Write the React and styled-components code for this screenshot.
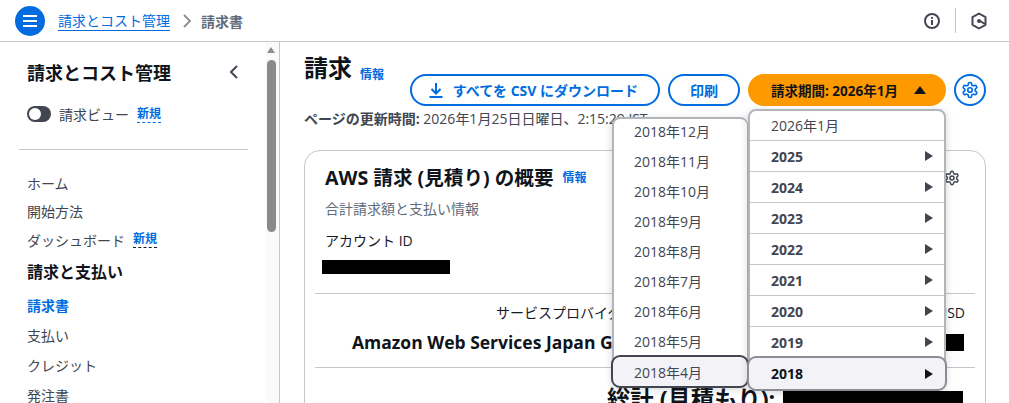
import styled, { createGlobalStyle } from "styled-components";

const GlobalStyle = createGlobalStyle`
  html, body {
    margin: 0;
    height: 403px;
    overflow: hidden;
    background: #ffffff;
    color: #16191f;
    font-family: "Open Sans", "Noto Sans CJK JP", sans-serif;
    font-size: 14px;
  }
  * { box-sizing: border-box; }
`;

const Page = styled.div`
  width: 1009px;
  height: 403px;
  display: flex;
  flex-direction: column;
  overflow: hidden;
`;

const TopBar = styled.header`
  height: 42px;
  flex-shrink: 0;
  display: flex;
  align-items: center;
  padding: 0 22px 0 15px;
  border-bottom: 1px solid #c6c6cd;
`;

const MenuButton = styled.button`
  width: 30px;
  height: 30px;
  border: 0;
  padding: 0;
  border-radius: 50%;
  background: #006ce0;
  color: #fff;
  display: grid;
  place-items: center;
  margin-right: 13px;
`;

const Crumb = styled.a`
  color: #006ce0;
  font-size: 14px;
  line-height: 19px;
  border-bottom: 1px solid #006ce0;
`;

const CrumbCurrent = styled.span`
  color: #5f6b7a;
  font-size: 14px;
  font-weight: 700;
`;

const CrumbSep = styled.span`
  display: flex;
  margin: 0 9px 0 12px;
  color: #8c8c94;
`;

const TopActions = styled.div`
  margin-left: auto;
  display: flex;
  align-items: center;
  color: #424650;
`;

const TopDivider = styled.span`
  width: 1px;
  height: 25px;
  background: #c6c6cd;
  margin: 0 15px;
`;

const Body = styled.div`
  flex: 1;
  display: flex;
  min-height: 0;
`;

const Side = styled.nav`
  width: 266px;
  flex-shrink: 0;
  padding: 18px 18px 0 19px;
`;

const SideHead = styled.div`
  display: flex;
  align-items: center;
  justify-content: space-between;
  padding: 0 9px 0 8px;
  height: 24px;
  font-size: 18px;
  font-weight: 700;
  color: #0f141a;
`;

const ViewToggle = styled.div`
  display: flex;
  align-items: center;
  gap: 8px;
  margin-top: 18px;
  padding-left: 8px;
  color: #424650;
  height: 24px;
`;

const Switch = styled.span`
  width: 24px;
  height: 16px;
  border-radius: 8px;
  background: #424650;
  position: relative;
  &::before {
    content: "";
    position: absolute;
    left: 2px;
    top: 2px;
    width: 12px;
    height: 12px;
    border-radius: 50%;
    background: #fff;
  }
`;

const NewTag = styled.span`
  color: #006ce0;
  font-size: 12px;
  font-weight: 700;
  line-height: 16px;
  border-bottom: 1px dashed ${(p) => (p.$dark ? "#16191f" : "#006ce0")};
`;

const SideRule = styled.hr`
  border: 0;
  border-top: 1px solid #c6c6cd;
  margin: 23px 0 0;
`;

const NavList = styled.ul`
  list-style: none;
  margin: 19px 0 0;
  padding: 0 0 0 8px;
  display: flex;
  flex-direction: column;
`;

const NavItem = styled.li`
  height: ${(p) => (p.$h ? p.$h : 30)}px;
  flex-shrink: 0;
  display: flex;
  align-items: center;
  gap: 8px;
  margin-bottom: ${(p) => (p.$head ? 2 : 0)}px;
  color: ${(p) => (p.$active ? "#006ce0" : p.$head ? "#0f141a" : "#424650")};
  font-weight: ${(p) => (p.$active || p.$head ? 700 : 400)};
  font-size: ${(p) => (p.$head ? 16 : 14)}px;
`;

const Track = styled.div`
  width: 14px;
  flex-shrink: 0;
  background: #fafafa;
  position: relative;
  border-right: 1px solid #c6c6cd;
  &::before {
    content: "";
    position: absolute;
    left: 1px;
    top: 5px;
    border: 4.5px solid transparent;
    border-top: 0;
    border-bottom: 6px solid #8c8c94;
  }
`;

const Thumb = styled.div`
  position: absolute;
  left: 1px;
  top: 18px;
  width: 9px;
  height: 172px;
  background: #8a8a8a;
  border-radius: 5px;
`;

const Main = styled.main`
  flex: 1;
  background: #ffffff;
  padding: 10px 23px 0 24px;
  position: relative;
  min-width: 0;
`;

const TitleRow = styled.div`
  display: flex;
  align-items: flex-start;
  height: 57px;
`;

const PageTitle = styled.h1`
  margin: 0;
  font-size: 24px;
  font-weight: 700;
  line-height: 32px;
  color: #0f141a;
`;

const Info = styled.a`
  color: #006ce0;
  font-size: 12px;
  font-weight: 700;
  margin-left: 8px;
  line-height: 16px;
  margin-top: ${(p) => p.$top || 0}px;
`;

const Actions = styled.div`
  margin-left: auto;
  display: flex;
  gap: 8px;
  margin-top: 22px;
  align-items: center;
`;

const Btn = styled.button`
  height: 32px;
  padding: 0 20px;
  border-radius: 16px;
  border: 2px solid #006ce0;
  background: #fff;
  color: #006ce0;
  font: 700 14px "Open Sans", "Noto Sans CJK JP", sans-serif;
  display: flex;
  align-items: center;
  gap: 9px;
  white-space: nowrap;
`;

const DownloadBtn = styled(Btn)`
  padding-left: 16px;
`;

const PeriodBtn = styled(Btn)`
  background: #ff9900;
  border-color: #ff9900;
  color: #0f141a;
  width: 198px;
  justify-content: flex-start;
  gap: 16px;
  padding: 0 0 0 21px;
  font-size: 13.5px;
`;

const GearBtn = styled(Btn)`
  width: 32px;
  padding: 0;
  justify-content: center;
`;

const Updated = styled.div`
  font-size: 14px;
  line-height: 20px;
  color: #424650;
  white-space: nowrap;
`;

const Card = styled.section`
  margin-top: 21px;
  height: 300px;
  border: 1px solid #c6c6cd;
  border-radius: 16px;
  position: relative;
  padding: 0 20px;
`;

const CardTitle = styled.div`
  display: flex;
  align-items: center;
  padding-top: 14px;
  height: 40px;
  h2 {
    margin: 0;
    font-size: 19.6px;
    font-weight: 700;
    line-height: 26px;
    color: #0f141a;
  }
  a {
    margin-left: 9px;
  }
`;

const CardGear = styled.span`
  position: absolute;
  right: 25px;
  top: 19px;
  display: flex;
  color: #424650;
`;

const CardDesc = styled.p`
  margin: 8px 0 0;
  font-size: 14px;
  line-height: 20px;
  color: #5f6b7a;
`;

const Label = styled.div`
  margin-top: 12px;
  font-size: 14px;
  line-height: 20px;
`;

const Redact = styled.span`
  display: block;
  flex-shrink: 0;
  background: #000;
  width: ${(p) => p.$w}px;
  height: ${(p) => p.$h}px;
`;

const AccountRedact = styled(Redact)`
  margin: 9px 0 0 -3px;
`;

const Rule = styled.hr`
  border: 0;
  border-top: 1px solid #c6c6cd;
  margin: ${(p) => p.$top}px -10px 0;
`;

const ProviderRow = styled.div`
  height: 73px;
  margin: 0 -10px;
  padding: 9px 0 0;
  position: relative;
`;

const ProviderLabel = styled.div`
  font-size: 14px;
  line-height: 20px;
  white-space: nowrap;
  padding-left: 181px;
`;

const ProviderName = styled.div`
  font-size: 17.5px;
  font-weight: 700;
  line-height: 26px;
  margin-top: 6px;
  padding-left: 37px;
  white-space: nowrap;
  color: #0f141a;
`;

const UsdLabel = styled.span`
  position: absolute;
  right: 10px;
  top: 9px;
  font-size: 14px;
  line-height: 20px;
`;

const UsdRedact = styled(Redact)`
  position: absolute;
  right: 11px;
  top: 40px;
`;

const TotalRow = styled.div`
  display: flex;
  align-items: center;
  gap: 8px;
  padding: 15px 0 0 282px;
  font-size: 23.3px;
  font-weight: 700;
  line-height: 32px;
  white-space: nowrap;
  color: #0f141a;
`;

const Menu = styled.ul`
  position: absolute;
  margin: 0;
  padding: 0;
  list-style: none;
  background: #fff;
  border: 2px solid #b4b4bb;
  border-radius: 8px;
  box-shadow: 0 2px 8px rgba(15, 20, 26, 0.18);
`;

const YearMenu = styled(Menu)`
  left: 468px;
  top: 67px;
  width: 198px;
`;

const MonthMenu = styled(Menu)`
  left: 332px;
  top: 75px;
  width: 136px;
  border-right-width: 1px;
`;

const YearItem = styled.li`
  height: ${(p) => (p.$first ? 29 : 31)}px;
  display: flex;
  align-items: center;
  justify-content: space-between;
  padding: ${(p) => (p.$first ? "0 11px 2px 21px" : "0 11px 0 21px")};
  font-size: 14px;
  font-weight: ${(p) => (p.$plain ? 400 : 700)};
  color: ${(p) => (p.$open ? "#0f141a" : "#424650")};
  border-top: ${(p) => (p.$first || p.$open ? 0 : "1px solid #c6c6cd")};
  ${(p) =>
    p.$open &&
    `
    background: #f3f3f7;
    outline: 2px solid #8c8c94;
    outline-offset: -1px;
    border-radius: 8px;
    margin: 0 -2px -2px;
    padding: 0 13px 0 23px;
    height: 33px;
    position: relative;
  `}
`;

const MonthItem = styled.li`
  height: ${(p) => (p.$first ? 27 : 30)}px;
  display: flex;
  align-items: center;
  padding: ${(p) => (p.$first ? "0 0 3px 20px" : "0 0 0 20px")};
  font-size: 14px;
  color: #424650;
  ${(p) =>
    p.$active &&
    `
    background: #f3f3f7;
    outline: 2px solid #424650;
    outline-offset: -1px;
    border-radius: 8px;
    margin: 0 -1px -2px -2px;
    padding-left: 22px;
    height: 31px;
    position: relative;
  `}
`;

const Caret = styled.span`
  width: 0;
  height: 0;
  border-top: 5.5px solid transparent;
  border-bottom: 5.5px solid transparent;
  border-left: 8px solid currentColor;
`;

const CaretUp = styled.span`
  width: 0;
  height: 0;
  border-left: 6px solid transparent;
  border-right: 6px solid transparent;
  border-bottom: 8px solid #0f141a;
`;

const GearIcon = ({ size = 18 }) => (
  <svg width={size} height={size} viewBox="0 0 24 24" fill="none" stroke="currentColor" strokeWidth="2.2" strokeLinecap="round" strokeLinejoin="round">
    <path d="M12.22 2h-.44a2 2 0 0 0-2 2v.18a2 2 0 0 1-1 1.73l-.43.25a2 2 0 0 1-2 0l-.15-.08a2 2 0 0 0-2.73.73l-.22.38a2 2 0 0 0 .73 2.73l.15.1a2 2 0 0 1 1 1.72v.51a2 2 0 0 1-1 1.74l-.15.09a2 2 0 0 0-.73 2.73l.22.38a2 2 0 0 0 2.73.73l.15-.08a2 2 0 0 1 2 0l.43.25a2 2 0 0 1 1 1.73V20a2 2 0 0 0 2 2h.44a2 2 0 0 0 2-2v-.18a2 2 0 0 1 1-1.73l.43-.25a2 2 0 0 1 2 0l.15.08a2 2 0 0 0 2.73-.73l.22-.39a2 2 0 0 0-.73-2.73l-.15-.08a2 2 0 0 1-1-1.74v-.5a2 2 0 0 1 1-1.74l.15-.09a2 2 0 0 0 .73-2.73l-.22-.38a2 2 0 0 0-2.73-.73l-.15.08a2 2 0 0 1-2 0l-.43-.25a2 2 0 0 1-1-1.73V4a2 2 0 0 0-2-2z" />
    <circle cx="12" cy="12" r="3" />
  </svg>
);

const years = ["2025", "2024", "2023", "2022", "2021", "2020", "2019"];
const months = [12, 11, 10, 9, 8, 7, 6, 5];

const App = () => {
  return (
    <Page>
      <GlobalStyle />
      <TopBar>
        <MenuButton>
          <svg width="16" height="14" viewBox="0 0 16 14" fill="none" stroke="currentColor" strokeWidth="2">
            <path d="M1 2h14M1 7h14M1 12h14" />
          </svg>
        </MenuButton>
        <Crumb>請求とコスト管理</Crumb>
        <CrumbSep>
          <svg width="10" height="14" viewBox="0 0 10 14" fill="none" stroke="currentColor" strokeWidth="1.8">
            <path d="M2 1l6 6-6 6" />
          </svg>
        </CrumbSep>
        <CrumbCurrent>請求書</CrumbCurrent>
        <TopActions>
          <svg width="16" height="16" viewBox="0 0 16 16" fill="none" stroke="currentColor" strokeWidth="2">
            <circle cx="8" cy="8" r="7" />
            <path d="M8 7v5M8 4v1.800" />
          </svg>
          <TopDivider />
          <svg width="16" height="18" viewBox="0 0 16 18" fill="none" stroke="currentColor" strokeWidth="2" strokeLinejoin="round">
            <path d="M8 1.500l6.500 3.700v7.600L8 16.500l-6.500-3.700V5.200z" />
            <circle cx="8" cy="9" r="2" fill="currentColor" stroke="none" />
            <path d="M9 9l5 3" />
          </svg>
        </TopActions>
      </TopBar>
      <Body>
        <Side>
          <SideHead>
            請求とコスト管理
            <svg width="10" height="14" viewBox="0 0 10 14" fill="none" stroke="#424650" strokeWidth="2">
              <path d="M8 1L2 7l6 6" />
            </svg>
          </SideHead>
          <ViewToggle>
            <Switch />
            請求ビュー
            <NewTag>新規</NewTag>
          </ViewToggle>
          <SideRule />
          <NavList>
            <NavItem $h={28}>ホーム</NavItem>
            <NavItem $h={28}>開始方法</NavItem>
            <NavItem $h={29}>
              ダッシュボード
              <NewTag $dark>新規</NewTag>
            </NavItem>
            <NavItem $head $h={34}>請求と支払い</NavItem>
            <NavItem $active>請求書</NavItem>
            <NavItem>支払い</NavItem>
            <NavItem>クレジット</NavItem>
            <NavItem>発注書</NavItem>
          </NavList>
        </Side>
        <Track>
          <Thumb />
        </Track>
        <Main>
          <TitleRow>
            <PageTitle>請求</PageTitle>
            <Info $top={15}>情報</Info>
            <Actions>
              <DownloadBtn>
                <svg width="16" height="16" viewBox="0 0 16 16" fill="none" stroke="currentColor" strokeWidth="2">
                  <path d="M8 1v10M3.500 7L8 11.500 12.500 7M1.500 15h13" />
                </svg>
                すべてを CSV にダウンロード
              </DownloadBtn>
              <Btn>印刷</Btn>
              <PeriodBtn>
                請求期間: 2026年1月
                <CaretUp />
              </PeriodBtn>
              <GearBtn>
                <GearIcon />
              </GearBtn>
            </Actions>
          </TitleRow>
          <Updated>
            <b>ページの更新時間:</b> 2026年1月25日日曜日、2:15:29 JST
          </Updated>
          <Card>
            <CardTitle>
              <h2>AWS 請求 (見積り) の概要</h2>
              <Info>情報</Info>
            </CardTitle>
            <CardGear>
              <GearIcon size={16} />
            </CardGear>
            <CardDesc>合計請求額と支払い情報</CardDesc>
            <Label>アカウント ID</Label>
            <AccountRedact $w={128} $h={14} />
            <Rule $top={19} />
            <ProviderRow>
              <ProviderLabel>サービスプロバイダー</ProviderLabel>
              <ProviderName>Amazon Web Services Japan G.K.</ProviderName>
              <UsdLabel>USD</UsdLabel>
              <UsdRedact $w={18} $h={17} />
            </ProviderRow>
            <Rule $top={0} />
            <TotalRow>
              総計 (見積もり):
              <Redact $w={180} $h={16} />
            </TotalRow>
          </Card>
          <MonthMenu>
            {months.map((m, i) => (
              <MonthItem key={m} $first={i === 0}>2018年{m}月</MonthItem>
            ))}
            <MonthItem $active>2018年4月</MonthItem>
          </MonthMenu>
          <YearMenu>
            <YearItem $first $plain>2026年1月</YearItem>
            {years.map((y) => (
              <YearItem key={y}>
                {y}
                <Caret />
              </YearItem>
            ))}
            <YearItem $open>
              2018
              <Caret />
            </YearItem>
          </YearMenu>
        </Main>
      </Body>
    </Page>
  );
};

export default App;
